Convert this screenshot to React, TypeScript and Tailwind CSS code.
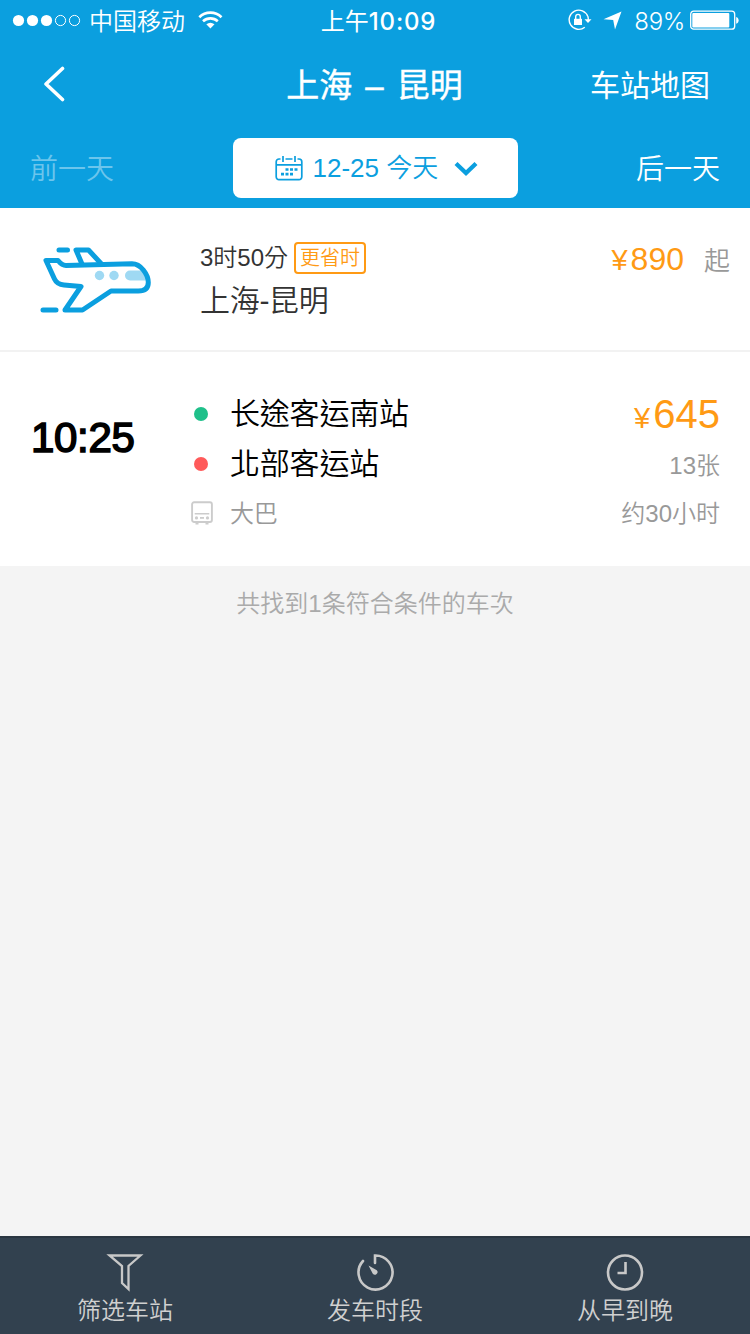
import type { ReactNode } from "react";

function StatusBar() {
    return (
        <div className="flex h-10 items-center justify-between pl-3 pr-[11px] text-2xl leading-10">
            <div className="flex w-[230px] items-center">
                <svg width="70" height="16" viewBox="0 0 70 16" fill="none">
                    <circle cx="6.5" cy="8.5" r="5.6" fill="#fff" />
                    <circle cx="20.5" cy="8.5" r="5.6" fill="#fff" />
                    <circle cx="34.5" cy="8.5" r="5.6" fill="#fff" />
                    <circle cx="48.5" cy="8.5" r="5.1" stroke="#fff" />
                    <circle cx="62.5" cy="8.5" r="5.1" stroke="#fff" />
                </svg>
                <span className="ml-[7px] pt-[3px] font-[350]">中国移动</span>
                <svg className="ml-[13px]" width="25" height="20" viewBox="0 0 25 20" fill="none">
                    <path d="M1.3 7.2a16 16 0 0 1 22.2 0" stroke="#fff" strokeWidth="2.7" />
                    <path d="M5 11.2a11 11 0 0 1 14.8 0" stroke="#fff" strokeWidth="2.6" />
                    <path d="M8.3 14.3a6.6 6.6 0 0 1 8.2 0L12.4 18.6z" fill="#fff" />
                </svg>
            </div>
            <div className="pt-[3px] pl-1.5 font-['Inter','Noto_Sans_CJK_TC',sans-serif] font-medium">
                <span className="font-normal">上午</span>
                <span className="tracking-[0.8px]">10:09</span>
            </div>
            <div className="flex w-[230px] items-center justify-end">
                <svg width="26" height="22" viewBox="0 0 26 22" fill="none">
                    <path d="M20.8 7.5A9.6 9.6 0 1 0 17.8 18.2" stroke="#fff" strokeWidth="1.4" />
                    <path d="M20.8 7.2q.8 2 .4 4.5" stroke="#fff" strokeWidth="1.4" />
                    <path d="M17.5 10.2h7l-3.5 3.8z" fill="#fff" />
                    <rect x="7" y="9.8" width="8" height="6.2" fill="#fff" />
                    <path d="M8.7 10V7.7a2.3 2.3 0 0 1 4.6 0V10" stroke="#fff" strokeWidth="1.4" />
                </svg>
                <svg className="ml-[9px]" width="20" height="20" viewBox="0 0 20 20">
                    <path d="M19.5 1.5L13 19.5L11.2 10L1.5 9.3z" fill="#fff" />
                </svg>
                <span className="ml-3 pt-[3px] font-['Inter',sans-serif] font-light tracking-[-0.3px]">89%</span>
                <svg className="ml-[5px]" width="49" height="20" viewBox="0 0 49 20" fill="none">
                    <rect x="0.7" y="1.2" width="44" height="18" rx="3" stroke="#fff" strokeWidth="1.3" />
                    <rect x="2.3" y="3" width="37" height="14.6" rx="1" fill="#fff" />
                    <path d="M46.2 7c3.2.5 3.2 6.2 0 6.8z" fill="#fff" />
                </svg>
            </div>
        </div>
    );
}

function PlaneIcon() {
    return (
        <svg width="112" height="68" viewBox="0 0 112 68" fill="none">
            <g fill="#9fd9f3">
                <circle cx="59.5" cy="29.5" r="4.7" />
                <circle cx="74" cy="29.5" r="4.7" />
                <path d="M90 24.5h13l6 10H90a5 5 0 0 1 0-10z" />
            </g>
            <g stroke="#0b9fdf" strokeWidth="5" strokeLinecap="round" strokeLinejoin="round">
                <path d="M19 4h8.5M3 64h13" />
                <path d="M42 18L36 4h12.5L61 17.5" />
                <path d="M6 14.5H18q4 5 8 5L92 17.8c9 0 16.3 11 16.3 18.7 0 5.500-3.500 8.500-10 8.500H71L42.500 64H25l16-23.500-17-1.500q-7-.6-9.500-6z" />
            </g>
        </svg>
    );
}

function BusIcon() {
    return (
        <svg width="22" height="24" viewBox="0 0 22 24" fill="none">
            <rect x="1.1" y="1.3" width="19.8" height="19.7" rx="2" stroke="#ccc" strokeWidth="1.9" />
            <path d="M3.7 12.8h14.6M4.5 22.6h3M14.5 22.6h3" stroke="#ccc" strokeWidth="1.6" />
            <path d="M9 16.9h4" stroke="#ccc" strokeWidth="1.8" />
            <circle cx="5.5" cy="16.9" r="1.6" fill="#ccc" />
            <circle cx="16.5" cy="16.9" r="1.6" fill="#ccc" />
        </svg>
    );
}

function Tab({ label, children }: { label: string; children: ReactNode }) {
    return (
        <button className="flex flex-1 flex-col items-center pt-3.5 text-2xl leading-[37px] font-[350] text-[#d0d0d0]">
            <svg width="40" height="40" viewBox="0 0 40 40" fill="none" stroke="#c8c8c8" strokeWidth="2.6">
                {children}
            </svg>
            {label}
        </button>
    );
}

export default function App() {
    return (
        <div className="flex h-[1334px] w-[750px] flex-col bg-[#f4f4f4] font-['Liberation_Sans','Noto_Sans_CJK_TC',sans-serif]">
            <header className="h-[208px] bg-[#0b9fdf] text-white">
                <StatusBar />
                <div className="flex h-[88px] items-center justify-between pr-10 pl-[42px]">
                    <button className="w-[117px]">
                        <svg width="24" height="36" viewBox="0 0 24 36" fill="none">
                            <path d="M20.5 2.5L4 18l16.5 15.5" stroke="#fff" strokeWidth="3.6" strokeLinecap="round" strokeLinejoin="round" />
                        </svg>
                    </button>
                    <h1 className="flex pt-[3px] text-[33px] [-webkit-text-stroke:0.4px_white]">
                        上海<span className="mx-[13px]">–</span>昆明
                    </h1>
                    <button className="pt-0.5 text-[30px]">车站地图</button>
                </div>
                <div className="flex h-20 items-center justify-between px-[30px] text-[28px] font-[350]">
                    <span className="pt-1 text-[#6cc5ec]">前一天</span>
                    <button className="flex h-[60px] w-[285px] items-center rounded-lg bg-white pl-[42px] text-[26px] text-[#0b9fdf]">
                        <svg width="28" height="26" viewBox="0 0 28 26" fill="none" stroke="#0b9fdf" strokeWidth="1.7">
                            <path d="M5.5 4H4a2.8 2.8 0 0 0-2.8 2.8v15A2.8 2.8 0 0 0 4 24.6h20a2.8 2.8 0 0 0 2.8-2.8v-15A2.8 2.8 0 0 0 24 4h-1.5M10.5 4h7M1.2 9.8h25.6M8 1v6M20 1v6" />
                            <path d="M10.5 14.5h3M15 14.5h3M19.5 14.5h3M6 19.2h3M10.5 19.2h3M15 19.2h3" strokeWidth="2.7" />
                        </svg>
                        <span className="ml-2.5">12-25 今天</span>
                        <svg className="ml-4 mt-0.5" width="24" height="18" viewBox="0 0 24 18" fill="none">
                            <path d="M2 3.5l10 9.5 10-9.5" stroke="#0b9fdf" strokeWidth="4.3" />
                        </svg>
                    </button>
                    <span className="pt-1">后一天</span>
                </div>
            </header>

            <section className="flex h-36 border-b-2 border-[#f2f2f2] bg-white pt-[30px] text-[#333]">
                <div className="w-[200px] pt-2 pl-10">
                    <PlaneIcon />
                </div>
                <div className="flex-1">
                    <div className="flex h-10 items-center text-2xl">
                        <span className="font-[350]">3时50分</span>
                        <span className="ml-1.5 flex h-8 w-[72px] items-center justify-center rounded border-2 border-[#ff9a14] text-xl leading-7 font-[350] text-[#ff9a14]">
                            更省时
                        </span>
                    </div>
                    <div className="text-[30px] leading-[45px] font-[350] tracking-[-0.3px]">上海-昆明</div>
                </div>
                <div className="flex h-[42px] items-baseline pr-5 leading-[42px] text-[#ff9a14]">
                    <span className="mr-[3px] text-[29px]">¥</span>
                    <span className="text-[32px]">890</span>
                    <span className="ml-5 text-[26px] font-[350] text-[#999]">起</span>
                </div>
            </section>

            <section className="flex h-[214px] bg-white pt-9">
                <div className="w-[190px] pt-5 pl-[31px] text-[42px] leading-[60px] tracking-[-0.3px] text-black [-webkit-text-stroke:1.6px_black]">
                    10:25
                </div>
                <div className="flex-1 pt-px text-[30px] leading-[50px] font-[350] tracking-[-0.2px] text-black">
                    <div className="flex items-center">
                        <i className="mr-[22px] ml-1 size-3.5 rounded-full bg-[#1fc08a]" />
                        长途客运南站
                    </div>
                    <div className="flex items-center">
                        <i className="mr-[22px] ml-1 size-3.5 rounded-full bg-[#ff5a5a]" />
                        北部客运站
                    </div>
                    <div className="flex items-center text-2xl leading-[50px] text-[#999]">
                        <span className="mr-[17px] mb-[3px] ml-px">
                            <BusIcon />
                        </span>
                        大巴
                    </div>
                </div>
                <div className="pr-[30px] text-right text-2xl leading-[48px] font-[350] text-[#999]">
                    <div className="flex h-[54px] items-baseline justify-end leading-[53px] text-[#ff9a14]">
                        <span className="mr-[3px] text-[29px]">¥</span>
                        <span className="text-[40px]">645</span>
                    </div>
                    <div>13张</div>
                    <div>约30小时</div>
                </div>
            </section>

            <p className="flex-1 pt-[18px] text-center text-2xl leading-10 font-[350] text-[#aaa]">共找到1条符合条件的车次</p>

            <nav className="flex h-[98px] border-t-2 border-[#2a3641] bg-[#32414f]">
                <Tab label="筛选车站">
                    <path d="M4.500 3.500h31L23.500 14v23L17 31V14z" strokeWidth="2.300" />
                </Tab>
                <Tab label="发车时段">
                    <path d="M20 11V3.500a17 17 0 1 1-12 5.500" strokeLinecap="round" />
                    <path d="M13.500 13.500l8.300 4.700a2.600 2.600 0 1 1-4 3.600z" fill="#c8c8c8" stroke="none" />
                </Tab>
                <Tab label="从早到晚">
                    <circle cx="20" cy="20.500" r="17" />
                    <path d="M20.500 10v11h-8" />
                </Tab>
            </nav>
        </div>
    );
}
